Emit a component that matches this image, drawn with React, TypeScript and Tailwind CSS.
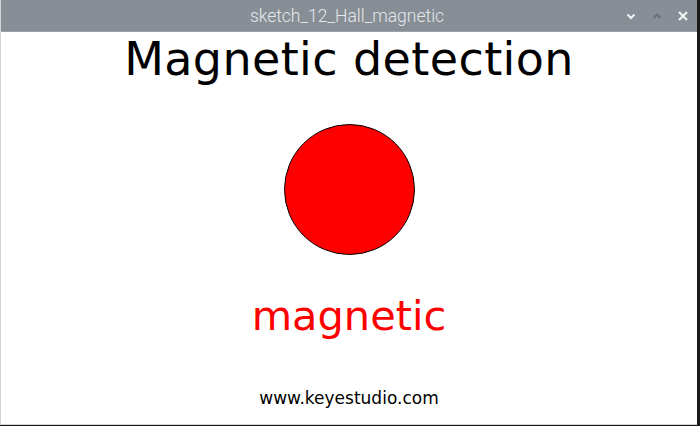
import React from "react";

export default function App() {
  return (
    <div className="w-[700px] h-[426px] bg-[#1a1a1a] flex overflow-hidden">
      <div className="w-[697px] h-[425px] flex flex-col bg-white border-l border-b border-[#d4d4d4]">
        <div className="h-[32px] bg-[#878e96] flex items-center relative shrink-0 border-b border-[#9aa1a8]">
          <div className="flex-1 text-center text-[17.5px] text-[#e6e8ea] font-['Roboto',sans-serif] font-light pt-[1px] pr-[4px]">
            sketch_12_Hall_magnetic
          </div>
          <div className="absolute right-[8px] top-0 h-full flex items-center gap-[14px]">
            <svg width="12" height="12" viewBox="0 0 12 12">
              <path d="M2.5 4.5 L6 8 L9.5 4.5" stroke="#f2f2f2" strokeWidth="2" fill="none" />
            </svg>
            <svg width="12" height="12" viewBox="0 0 12 12">
              <path d="M2.5 8 L6 4.5 L9.5 8" stroke="#6a7077" strokeWidth="2" fill="none" />
            </svg>
            <svg width="12" height="12" viewBox="0 0 12 12">
              <path d="M2 2 L10 10 M10 2 L2 10" stroke="#f2f2f2" strokeWidth="2.2" fill="none" />
            </svg>
          </div>
        </div>
        <div className="flex-1 flex flex-col items-center font-['DejaVu_Sans',sans-serif]">
          <div className="text-[46px] leading-[52px] text-black mt-[1px] tracking-[0.4px]">Magnetic detection</div>
          <div className="mt-[39px] w-[131px] h-[131px] rounded-full bg-[#ff0000] border border-black"></div>
          <div className="mt-[37px] text-[41.5px] leading-[48px] text-[#ff0000]">magnetic</div>
          <div className="mt-[48px] text-[17px] leading-[20px] text-black">www.keyestudio.com</div>
        </div>
      </div>
    </div>
  );
}
